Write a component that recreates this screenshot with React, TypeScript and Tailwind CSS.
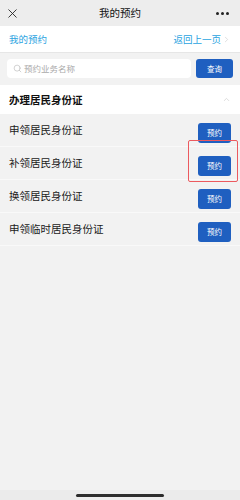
import { X, Search, ChevronRight, ChevronUp } from "lucide-react";

const items = ["申领居民身份证", "补领居民身份证", "换领居民身份证", "申领临时居民身份证"];

const App = () => {
  return (
    <div
      className="w-[240px] h-[500px] bg-[#f2f2f2] flex flex-col overflow-hidden"
      style={{ fontFamily: '"Noto Sans CJK SC", "Noto Sans", sans-serif' }}
    >
      {/* top bar */}
      <header className="h-[26px] bg-[#ededed] grid grid-cols-[40px_1fr_40px] items-center">
        <div className="pl-[5px]">
          <X size={15} strokeWidth={1.4} className="text-[#222]" />
        </div>
        <h1 className="text-center text-[10.5px] text-[#111] leading-none">我的预约</h1>
        <div className="flex justify-end gap-[2px] pr-[11px]">
          <span className="w-[3px] h-[3px] rounded-full bg-[#222]" />
          <span className="w-[3px] h-[3px] rounded-full bg-[#222]" />
          <span className="w-[3px] h-[3px] rounded-full bg-[#222]" />
        </div>
      </header>

      <nav className="h-[27px] bg-white border-b border-[#e6e6e6] px-[9px] flex items-center justify-between text-[#2aa3df]">
        <span className="text-[9.5px]">我的预约</span>
        <span className="flex items-center text-[9.5px]">
          返回上一页
          <ChevronRight size={9} strokeWidth={1.5} className="text-[#c8c8c8] ml-[1px]" />
        </span>
      </nav>

      {/* search */}
      <div className="h-[31px] px-[7px] flex items-center gap-[5px]">
        <div className="flex-1 h-[19px] bg-white rounded-[4px] flex items-center pl-[6px] gap-[2px]">
          <Search size={9} strokeWidth={1.4} className="text-[#aaa]" />
          <span className="text-[8.5px] text-[#aaa]">预约业务名称</span>
        </div>
        <button className="w-[37px] h-[19px] bg-[#1f5fc0] rounded-[3px] text-white text-[7.5px]">查询</button>
      </div>

      <section className="h-[29px] mt-[1px] bg-white px-[9px] flex items-center justify-between">
        <h2 className="text-[10.5px] font-bold text-[#111]">办理居民身份证</h2>
        <ChevronUp size={9} strokeWidth={1.5} className="text-[#c4c4c4]" />
      </section>

      <ul>
        {items.map((name, i) => (
          <li
            key={name}
            className="h-[33px] border-b border-[#f9f9f9] px-[9px] flex items-center justify-between"
          >
            <span className="text-[10.5px] text-[#1a1a1a]">{name}</span>
            <div className="relative">
              <button className="w-[33px] h-[20px] bg-[#1f5fc0] rounded-[3px] text-white text-[7.5px]">预约</button>
              {i === 1 && (
                <div className="absolute -left-[10px] -right-[7px] -top-[10px] -bottom-[6px] border-[1.5px] border-[#ec5a5f] rounded-[2px]" />
              )}
            </div>
          </li>
        ))}
      </ul>

      <div className="flex-1" />

      <div className="h-[10px] bg-[#ebebeb] flex items-center justify-center">
        <div className="w-[88px] h-[3px] rounded-full bg-[#2b2b2b]" />
      </div>
    </div>
  );
};

export default App;
